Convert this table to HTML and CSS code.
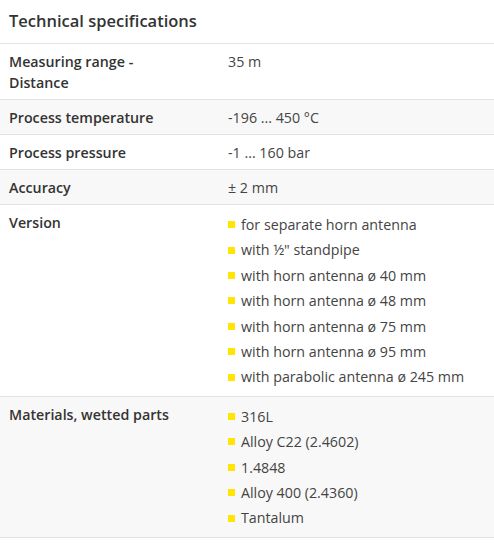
FILE: index.html
```html
<!DOCTYPE html>
<html>
<head>
<meta charset="utf-8">
<link rel="stylesheet" href="styles.css">
</head>
<body>
<section class="specs">
  <h2 class="title">Technical specifications</h2>
  <div class="table">
    <div class="row">
      <div class="label">Measuring range -<br>Distance</div>
      <div class="value">35 m</div>
    </div>
    <div class="row alt">
      <div class="label">Process temperature</div>
      <div class="value">-196 ... 450 °C</div>
    </div>
    <div class="row">
      <div class="label">Process pressure</div>
      <div class="value">-1 ... 160 bar</div>
    </div>
    <div class="row alt">
      <div class="label">Accuracy</div>
      <div class="value">± 2 mm</div>
    </div>
    <div class="row">
      <div class="label">Version</div>
      <ul class="value list">
        <li>for separate horn antenna</li>
        <li>with ½" standpipe</li>
        <li>with horn antenna ø 40 mm</li>
        <li>with horn antenna ø 48 mm</li>
        <li>with horn antenna ø 75 mm</li>
        <li>with horn antenna ø 95 mm</li>
        <li>with parabolic antenna ø 245 mm</li>
      </ul>
    </div>
    <div class="row alt">
      <div class="label">Materials, wetted parts</div>
      <ul class="value list">
        <li>316L</li>
        <li>Alloy C22 (2.4602)</li>
        <li>1.4848</li>
        <li>Alloy 400 (2.4360)</li>
        <li>Tantalum</li>
      </ul>
    </div>
  </div>
</section>
</body>
</html>
```
FILE: styles.css
```css
html, body {
  margin: 0;
  padding: 0;
  background: #fff;
}
body {
  font-family: "Open Sans", "Liberation Sans", sans-serif;
  color: #333;
  font-size: 14.25px;
}
.title {
  margin: 0;
  padding: 7px 9px 9px;
  font-size: 16.5px;
  line-height: 27px;
  font-weight: 600;
  color: #333;
  border-bottom: 1px solid #e2e2e2;
}
.row {
  display: grid;
  grid-template-columns: 219px 1fr;
  padding: 7px 9px 6px;
  border-bottom: 1px solid #e2e2e2;
  background: #fff;
}
.row.alt {
  background: #f8f8f8;
}
.label {
  font-weight: 600;
  line-height: 21px;
  color: #333;
}
.value {
  line-height: 21px;
  color: #444;
}
.list {
  list-style: none;
  margin: 0;
  padding: 0;
}
.list li {
  line-height: 25.4px;
  display: flex;
  align-items: center;
  gap: 6px;
}
.list li::before {
  content: "";
  width: 7px;
  height: 7px;
  background: #ffe600;
  flex: none;
}
```
